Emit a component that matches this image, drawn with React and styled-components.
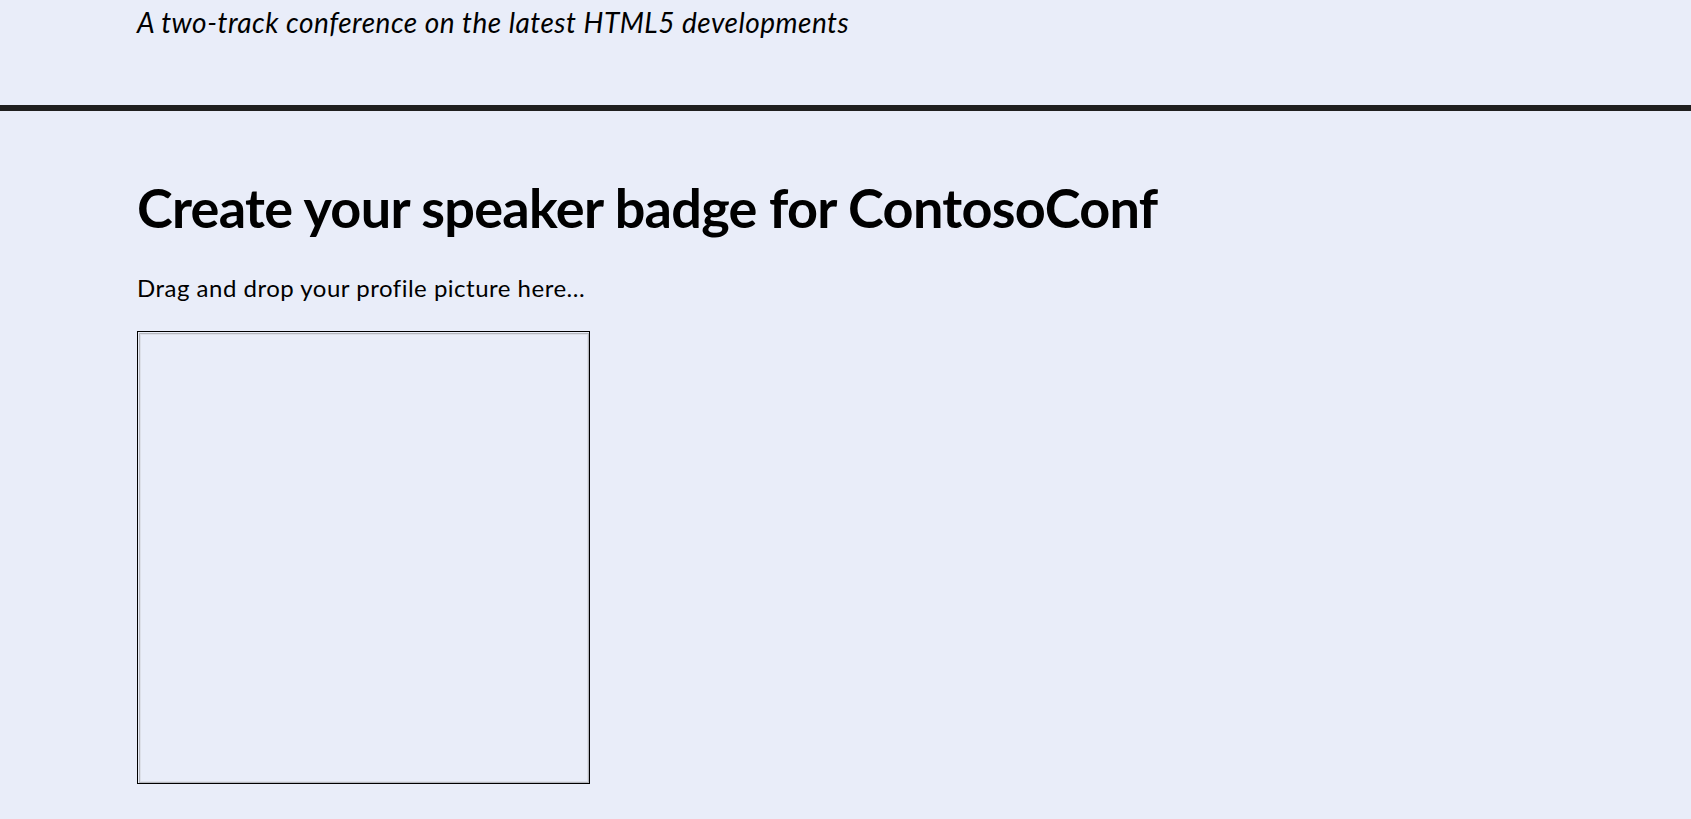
import React from "react";
import styled, { createGlobalStyle } from "styled-components";

const GlobalStyle = createGlobalStyle`
    html, body {
        margin: 0;
        padding: 0;
        background: #e9edf9;
    }

    body {
        font-family: Lato, "Liberation Sans", sans-serif;
        color: #000;
    }
`;

const Header = styled.header`
    height: 105px;
    border-bottom: 6px solid #1f1f1f;
    box-sizing: content-box;
`;

const Wrapper = styled.div`
    padding-left: 137px;
`;

const Tagline = styled.p`
    margin: 0;
    padding-top: 7px;
    font-size: 28px;
    line-height: 30px;
    font-style: italic;
    letter-spacing: 0.5px;
`;

const Main = styled.main`
    padding-top: 66px;
`;

const Title = styled.h1`
    margin: 0;
    font-size: 54px;
    line-height: 61px;
    font-weight: 700;
    letter-spacing: -0.7px;
`;

const Hint = styled.p`
    margin: 37px 0 0;
    font-size: 24px;
    line-height: 25px;
    letter-spacing: 0.5px;
`;

const DropZone = styled.div`
    display: inline-block;
    margin-top: 31px;
    border: 1px solid #000;
    padding: 1px 0 0 1px;
`;

const Canvas = styled.div`
    width: 448px;
    height: 448px;
    border: 1px solid #b4b6bd;
    box-shadow: inset 0 0 0 1px #dcdfe8;
`;

export default function App() {
    return (
        <>
            <GlobalStyle />
            <Header>
                <Wrapper>
                    <Tagline>A two-track conference on the latest HTML5 developments</Tagline>
                </Wrapper>
            </Header>
            <Main>
                <Wrapper>
                    <Title>Create your speaker badge for ContosoConf</Title>
                    <Hint>Drag and drop your profile picture here...</Hint>
                    <DropZone>
                        <Canvas />
                    </DropZone>
                </Wrapper>
            </Main>
        </>
    );
}
